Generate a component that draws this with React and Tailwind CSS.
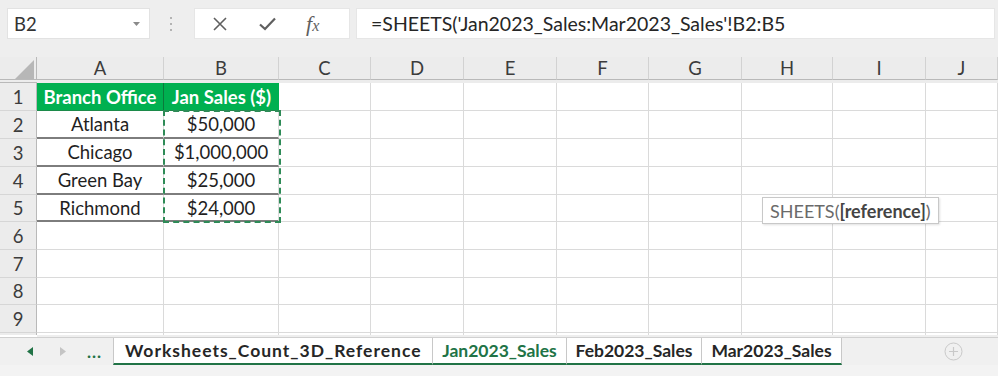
import React from "react";

const letters = ["A", "B", "C", "D", "E", "F", "G", "H", "I", "J"];
const rowH = [28, 28, 28, 28, 27, 28, 28, 27, 28];
const data = {
  1: ["Branch Office", "Jan Sales ($)"],
  2: ["Atlanta", "$50,000"],
  3: ["Chicago", "$1,000,000"],
  4: ["Green Bay", "$25,000"],
  5: ["Richmond", "$24,000"],
};

const gridCols =
  "grid grid-cols-[37px_127px_115px_92px_93px_93px_92px_93px_91px_93px_1fr]";

function Row({ n, h }) {
  const d = data[n];
  const cells = [];
  for (let c = 0; c < 10; c++) {
    let cls = "border-r border-b border-[#dadada] bg-white";
    let content = null;
    if (c === 0 && n === 1) {
      cls =
        "flex items-center justify-center border-r border-b border-r-[#0b7a3b] border-b-[#1c8a4a] bg-[#00b050] text-white font-bold text-[18.5px] whitespace-nowrap";
      content = d[0];
    } else if (c === 1 && n === 1) {
      cls =
        "flex items-center justify-center border-b border-b-[#1c8a4a] bg-[#00b050] text-white font-bold text-[18.5px] whitespace-nowrap";
      content = d[1];
    } else if (d && c === 0) {
      cls =
        "flex items-center justify-center border-r border-b-2 border-r-[#dadada] border-b-[#7d7d7d] bg-white text-[#1f1f1f] text-[18.5px]";
      content = d[0];
    } else if (d && c === 1) {
      cls =
        "flex items-center justify-center border-r border-b-2 border-r-[#dadada] border-b-[#7d7d7d] bg-white text-[#1f1f1f] text-[18.5px]";
      content = d[1];
    }
    cells.push(
      <div key={c} className={cls}>
        {content}
      </div>
    );
  }
  return (
    <div className={gridCols + " overflow-hidden"} style={{ height: h, gridTemplateRows: "100%" }}>
      <div className="flex items-center justify-center bg-[#ececec] border-r border-r-[#b9b9b9] border-b border-b-[#d6d6d6] text-[#3c3c3c] text-[18.5px]">
        {n}
      </div>
      {cells}
      <div className="border-b border-[#dadada] bg-white" />
    </div>
  );
}

export default function App() {
  return (
    <div
      className="w-[998px] h-[376px] bg-[#eeeeee] flex flex-col overflow-hidden relative leading-[20px]"
      style={{ fontFamily: "Lato, 'Open Sans', sans-serif" }}
    >
      {/* Formula bar */}
      <div className="h-[57px] flex items-start pt-[8px] pl-[7px] pr-[3px] shrink-0">
        <div className="w-[143px] h-[31px] bg-white border border-[#e2e2e2] flex items-center justify-between pl-[6px] pr-[9px]">
          <span className="text-[18.5px] text-[#333]">B2</span>
          <svg width="7" height="4" viewBox="0 0 7 4">
            <path d="M0 0 L7 0 L3.5 4 Z" fill="#8a8a8a" />
          </svg>
        </div>
        <div className="ml-[20px] mr-[22px] h-[31px] flex flex-col justify-center gap-[4px]">
          <div className="w-[2px] h-[2px] bg-[#b3b3b3]" />
          <div className="w-[2px] h-[2px] bg-[#b3b3b3]" />
          <div className="w-[2px] h-[2px] bg-[#b3b3b3]" />
        </div>
        <div className="w-[156px] h-[31px] bg-white border border-[#e6e6e6] flex items-center">
          <svg className="ml-[18px]" width="14" height="14" viewBox="0 0 14 14">
            <path d="M1 1 L13 13 M13 1 L1 13" stroke="#5f5f5f" strokeWidth="1.6" />
          </svg>
          <svg className="ml-[32px]" width="17" height="14" viewBox="0 0 17 14">
            <path d="M1 7.5 L6 12 L16 1.5" stroke="#5f5f5f" strokeWidth="2.2" fill="none" />
          </svg>
          <span
            className="ml-[30px] italic text-[#5f5f5f] text-[22px] leading-none"
            style={{ fontFamily: "'Liberation Serif', serif" }}
          >
            f<span className="text-[16px]">x</span>
          </span>
        </div>
        <div className="ml-[6px] flex-1 h-[31px] bg-white border border-[#e6e6e6] flex items-center pl-[14px]">
          <span className="text-[19.5px] text-[#262626] whitespace-nowrap">
            =SHEETS('Jan2023_Sales:Mar2023_Sales'!B2:B5
          </span>
        </div>
      </div>

      {/* Grid */}
      <div className="relative shrink-0">
        <div className={gridCols + " h-[26px] bg-[#ececec]"}>
          <div className="relative border-r border-r-[#b9b9b9] border-b border-b-[#b9b9b9]">
            <svg className="absolute left-[15px] top-[3px]" width="19" height="19" viewBox="0 0 19 19">
              <path d="M19 0 L19 19 L0 19 Z" fill="#b7b7b7" />
            </svg>
          </div>
          {letters.map((l) => (
            <div
              key={l}
              className="flex items-center justify-center border-r border-r-[#d2d2d2] border-b border-b-[#b9b9b9] text-[#3c3c3c] text-[18.5px]"
            >
              {l}
            </div>
          ))}
          <div className="border-b border-b-[#b9b9b9]" />
        </div>
        <div>
          {rowH.map((h, i) => (
            <Row key={i} n={i + 1} h={h} />
          ))}
          <div className={gridCols + " h-[4px]"}>
            <div className="bg-[#ececec] border-r border-r-[#b9b9b9]" />
            {letters.map((l) => (
              <div key={l} className="bg-white border-r border-[#dadada]" />
            ))}
            <div className="bg-white" />
          </div>
        </div>
        {/* marching ants around B2:B5 */}
        <div className="absolute left-[163px] top-[53px] w-[118px] h-[113px] border-2 border-dashed border-[#2e8b57]" />
        {/* function tooltip */}
        <div className="absolute left-[762px] top-[140px] h-[27px] px-[7px] bg-white border border-[#c8c8c8] shadow-[1px_1px_2px_rgba(0,0,0,0.12)] flex items-center text-[18px] text-[#6a6a6a] whitespace-nowrap">
          SHEETS(<span className="font-bold text-[#444]">[reference]</span>)
        </div>
      </div>

      {/* Sheet tabs */}
      <div className="h-[28px] flex bg-[#f0f0f0] border-t border-[#d0d0d0] shrink-0">
        <div className="w-[113px] flex items-center">
          <svg className="ml-[27px]" width="6" height="9" viewBox="0 0 6 9">
            <path d="M6 0 L6 9 L0 4.5 Z" fill="#217346" />
          </svg>
          <svg className="ml-[27px]" width="6" height="9" viewBox="0 0 6 9">
            <path d="M0 0 L0 9 L6 4.5 Z" fill="#c4c4c4" />
          </svg>
          <span className="ml-[21px] text-[#217346] font-bold text-[17px] tracking-[1px] leading-none">...</span>
        </div>
        <div className="flex h-full">
          <div className="w-[320px] h-full bg-white border-l border-r border-[#c8c8c8] border-b-2 border-b-[#217346] flex items-center pl-[11px] font-bold text-[17.5px] tracking-[1px] text-[#262626] whitespace-nowrap">
            Worksheets_Count_3D_Reference
          </div>
          <div className="w-[134px] h-full bg-white border-r border-[#c8c8c8] border-b-2 border-b-[#217346] flex items-center justify-center font-bold text-[17.5px] text-[#217346]">
            Jan2023_Sales
          </div>
          <div className="w-[135px] h-full bg-white border-r border-[#c8c8c8] border-b-2 border-b-[#217346] flex items-center justify-center font-bold text-[17.5px] text-[#262626]">
            Feb2023_Sales
          </div>
          <div className="w-[140px] h-full bg-white border-r border-[#c8c8c8] border-b-2 border-b-[#217346] flex items-center justify-center font-bold text-[17.5px] text-[#262626]">
            Mar2023_Sales
          </div>
        </div>
        <div className="flex-1 flex items-center">
          <svg className="ml-[102px]" width="19" height="19" viewBox="0 0 19 19">
            <circle cx="9.5" cy="9.5" r="8.5" stroke="#c9c9c9" strokeWidth="1" fill="none" />
            <path d="M9.5 5 V14 M5 9.5 H14" stroke="#c9c9c9" strokeWidth="1.2" />
          </svg>
        </div>
      </div>
      <div className="flex-1 bg-[#f3f3f3]" />
    </div>
  );
}
